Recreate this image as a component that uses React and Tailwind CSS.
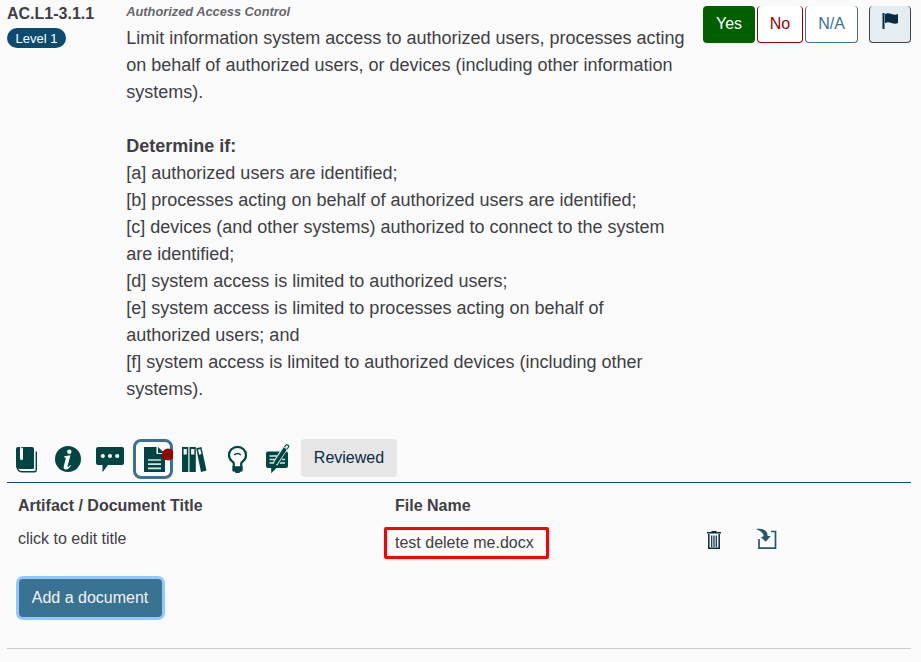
const INK = '#004443';

function Tool({ className = '', children, label }) {
  return (
    <svg viewBox="0 0 40 40" className={`block h-10 w-10 shrink-0 ${className}`} aria-label={label}>
      {children}
    </svg>
  );
}

function Toolbar() {
  return (
    <div className="flex h-[45px] items-start border-b border-[#0b4f75] pt-px">
      <Tool label="Book" className="mr-0.5 -ml-px">
        <path fill={INK} d="M12 8h2v11.500q.3 1.200 1.300 1V8H26q2 0 2 2v18.500q0 1.500-1.500 1.500H14q-4 0-4-4V10q0-2 2-2z" />
        <path fill="none" stroke={INK} strokeWidth="1.400" d="M10.700 27q1 5.700 5 5.700H28.500q1.800-.3 1.800-2.300V12.500" />
        <path fill="#fafafa" d="M14.500 10 17 8.500v12l-2.500.8z" />
      </Tool>
      <Tool label="Information" className="mr-0.5">
        <circle cx="20" cy="20" r="13" fill={INK} />
        <circle cx="21.300" cy="12.700" r="2.200" fill="#fafafa" />
        <path fill="#fafafa" d="M16.300 17.200q3-.3 6.200-1l-2.800 10.300q-.5 2 .6 1.500 1-.6 1.900-2l.8.5q-2.500 4-5 4-3.200 0-2.100-4l1.800-6.400q.5-1.900-1.600-1.800z" />
      </Tool>
      <Tool label="Comments" className="mr-[3px]">
        <path fill={INK} d="M8 8h24q2 0 2 2v14q0 2-2 2H18l-5.500 7.300V26H8q-2 0-2-2V10q0-2 2-2z" />
        <g fill="#fafafa"><circle cx="12.800" cy="17" r="2.100" /><circle cx="20" cy="17" r="2.100" /><circle cx="27.200" cy="17" r="2.100" /></g>
      </Tool>
      <Tool label="Documents" className="mr-px">
        <rect x="1.500" y="1.500" width="37" height="37" rx="6.500" fill="#fafafa" stroke="#3a7291" strokeWidth="3" />
        <path fill={INK} d="M11 8h12.500v7H32v18H11z" />
        <path fill={INK} d="M25 8 31.500 14H25z" />
        <path stroke="#d7e5e5" strokeWidth="1.700" d="M15 21h13M15 25.200h13M15 29.400h13" />
        <circle cx="35" cy="15.500" r="6" fill="#990000" />
      </Tool>
      <Tool label="References" className="mr-[3px]">
        <path fill={INK} fillRule="evenodd" d="M8 8h6.300v25H8zM9.600 10v5.500h3.200V10zM15.500 8h6.300v25h-6.300zM17.100 10v5.500h3.200V10z" />
        <path fill={INK} fillRule="evenodd" d="m22.200 9.200 5.200-1.300 5.100 23.500-5.500 1.700zM24 10.700l1.200 5 2.300-.6-1.200-5z" />
      </Tool>
      <Tool label="Observation">
        <path fill="none" stroke={INK} strokeWidth="2.200" d="M16.800 28v-3.500q0-1.200-1.800-2.300C13 20.800 12 18.500 12 16a8.500 8.200 0 0 1 17 0c0 2.500-1 4.800-3 6.200q-1.800 1.100-1.800 2.300V28" />
        <path fill={INK} d="M15.300 27.200h10.400v4q0 1.300-1.500 1.600h-1.500V34h-4.400v-1.200h-1.500q-1.500-.3-1.500-1.600z" />
        <path fill="none" stroke={INK} strokeWidth="1.500" d="M17.200 16q3.300-3 6.600 0" />
      </Tool>
      <Tool label="Feedback" className="mr-1">
        <path fill={INK} d="M11 12.500H29q2 0 2 2V27q0 2-2 2h-9.500l-5.300 5.200V29H11q-2 0-2-2V14.500q0-2 2-2z" />
        <path stroke="#d7e5e5" strokeWidth="1.300" d="M12.500 17h10M12.500 20.500h8M12.500 24h5M23 24h5M25 20.500h3" />
        <path stroke="#d7e5e5" strokeWidth="5.600" d="m18 25 10.500-16.500" />
        <path fill={INK} d="m16.500 27 1-4.600L26.800 8.500l3 2-9.400 14z" />
        <path fill="none" stroke={INK} strokeWidth="1.200" d="m27.500 8.200 1.500-2.200q.5-.7 1.500 0l.8.500q.8.600.3 1.300l-1.400 2.200" />
      </Tool>
      <button className="h-[38px] w-24 rounded-[4px] bg-[#e6e6e6] text-base leading-[38px] text-[#062b43]">Reviewed</button>
    </div>
  );
}

function Answers() {
  return (
    <div className="mt-1.5 ml-auto flex h-[37px] items-stretch text-base">
      <button className="mr-0.5 w-[52px] rounded-[4px] bg-[#006000] pb-0.5 text-white">Yes</button>
      <button className="mr-0.5 w-[46px] rounded-[4px] border border-t-0 border-[#990000] bg-white pb-px text-[#990000]">No</button>
      <button className="mr-[11px] w-[53px] rounded-[4px] border border-t-0 border-[#3a7291] bg-white pb-px text-[#3a7291]">N/A</button>
      <button aria-label="Flag" className="w-[42px] rounded-[4px] border border-t-0 border-[#3f4248] bg-[#e6edf1]">
        <svg viewBox="0 0 40 36" className="block h-9 w-10">
          <path fill="#062b43" d="M12.500 7H14.500v16h-2zM15 8q3-1.500 6.500 0t6.500 0v9q-3 1.500-6.500 0t-6.500 0z" />
        </svg>
      </button>
    </div>
  );
}

const objectives = [
  ['[a] authorized users are identified;'],
  ['[b] processes acting on behalf of authorized users are identified;'],
  ['[c] devices (and other systems) authorized to connect to the system', 'are identified;'],
  ['[d] system access is limited to authorized users;'],
  ['[e] system access is limited to processes acting on behalf of', 'authorized users; and'],
  ['[f] system access is limited to authorized devices (including other', 'systems).'],
];

export default function App() {
  return (
    <main className="h-[662px] w-[921px] overflow-hidden bg-[#fafafa] pr-[10px] pl-[7px] font-['Liberation_Sans',Arial,sans-serif] text-[#3f4044]">
      <section className="flex h-[438px] items-start">
        <div className="w-[119.3px] pt-[2px]">
          <h1 className="text-base leading-6 font-bold whitespace-nowrap">AC.L1-3.1.1</h1>
          <span className="mt-0.5 block h-5 w-[59px] rounded-full bg-[#0c4b6e] text-center text-[13px] leading-[21px] font-medium text-white">Level 1</span>
        </div>
        <div className="w-[570px] shrink-0 text-lg leading-[27px] whitespace-nowrap">
          <h2 className="pb-px text-[12.800px] leading-6 font-bold text-[#66676a] italic">Authorized Access Control</h2>
          <p>Limit information system access to authorized users, processes acting</p>
          <p>on behalf of authorized users, or devices (including other information</p>
          <p>systems).</p>
          <p className="mt-[27px] font-bold">Determine if:</p>
          {objectives.flat().map((line) => <p key={line}>{line}</p>)}
        </div>
        <Answers />
      </section>
      <Toolbar />
      <section className="flex h-[166px] items-start border-b border-[#cccccc] pl-[11px] text-base leading-6">
        <div className="w-[366px] pt-[11px]">
          <h3 className="font-bold">Artifact / Document Title</h3>
          <p className="mt-[9px]">click to edit title</p>
          <button className="mt-[28px] ml-px h-[38px] w-[143px] rounded-[4px] bg-[#3a7291] pr-px text-[#f2f5f7] ring-3 ring-[#91c8ff]">Add a document</button>
        </div>
        <div className="w-[165px] pt-[11px]">
          <h3 className="pl-[11px] font-bold">File Name</h3>
          <div className="mt-[9px] h-8 rounded-[2px] border-3 border-[#ff0000] pl-2 leading-[25px]">test delete me.docx</div>
        </div>
        <svg aria-label="Delete" viewBox="0 0 20 24" className="mt-[45px] ml-[155px] h-6 w-5">
          <path fill="#062b43" d="M3 4h4.500V3h5v1H17v1.600H3z" />
          <path fill="none" stroke="#062b43" strokeWidth="1.500" d="M4.800 6v14.200h10.400V6" />
          <path stroke="#062b43" strokeWidth="1.200" d="M7.700 7.500V19M10 7.500V19M12.300 7.500V19" />
        </svg>
        <svg aria-label="Export" viewBox="0 0 24 24" className="mt-[45px] ml-[31px] h-6 w-6">
          <path fill="none" stroke="#285767" strokeWidth="1.700" d="M4 11v9.200h16.500V3.500H16" />
          <path fill="#285767" d="M1 1c7-1 11.500 1.500 11.700 7h3L10.800 13.700 5.800 9.200l3-1Q8 3.500 1 1z" />
        </svg>
      </section>
    </main>
  );
}
